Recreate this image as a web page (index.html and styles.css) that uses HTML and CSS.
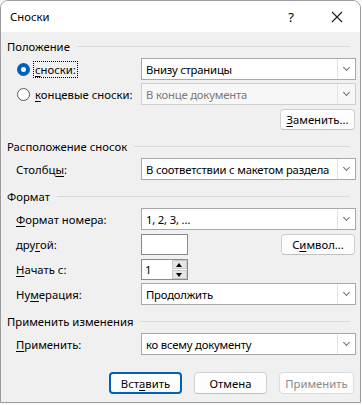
FILE: index.html
```html
<!DOCTYPE html>
<html lang="ru">
  <head>
    <meta charset="UTF-8" />
    <title>Сноски</title>
    <link rel="stylesheet" href="styles.css">
  </head>
  <body>
    <div class="dialog">
      <div class="titlebar">
        <span class="title">Сноски</span>
        <span class="help">?</span>
        <span class="close">
          <svg width="12" height="12" viewBox="0 0 12 12"><path d="M1 1L11 11M11 1L1 11" stroke="#1a1a1a" stroke-width="1.1" fill="none"/></svg>
        </span>
      </div>

      <div class="content">
        <div class="group first">
          <div class="group-title"><span>Положение</span><div class="line"></div></div>
          <div class="rows">
            <div class="row">
              <label class="label radio-label">
                <span class="radio checked"></span>
                <span class="focus"><u>с</u>носки:</span>
              </label>
              <div class="combo"><span>Внизу страницы</span><span class="arrow"></span></div>
            </div>
            <div class="row">
              <label class="label radio-label">
                <span class="radio"></span>
                <span class="plain"><u>к</u>онцевые сноски:</span>
              </label>
              <div class="combo disabled"><span>В конце документа</span><span class="arrow"></span></div>
            </div>
            <div class="row right">
              <button class="btn replace"><u>З</u>аменить...</button>
            </div>
          </div>
        </div>

        <div class="group">
          <div class="group-title"><span>Расположение сносок</span><div class="line"></div></div>
          <div class="rows">
            <div class="row">
              <label class="label">Столбц<u>ы</u>:</label>
              <div class="combo"><span>В соответствии с макетом раздела</span><span class="arrow"></span></div>
            </div>
          </div>
        </div>

        <div class="group">
          <div class="group-title"><span>Формат</span><div class="line"></div></div>
          <div class="rows">
            <div class="row">
              <label class="label"><u>Ф</u>ормат номера:</label>
              <div class="combo"><span>1, 2, 3, …</span><span class="arrow"></span></div>
            </div>
            <div class="row">
              <label class="label">дру<u>г</u>ой:</label>
              <div class="textbox"></div>
              <div class="spacer"></div>
              <button class="btn symbol">С<u>и</u>мвол...</button>
            </div>
            <div class="row">
              <label class="label"><u>Н</u>ачать с:</label>
              <div class="spin">
                <span class="spin-value">1</span>
                <span class="spin-buttons">
                  <span class="spin-up"></span>
                  <span class="spin-down"></span>
                </span>
              </div>
            </div>
            <div class="row">
              <label class="label">Ну<u>м</u>ерация:</label>
              <div class="combo"><span>Продолжить</span><span class="arrow"></span></div>
            </div>
          </div>
        </div>

        <div class="group">
          <div class="group-title"><span>Применить изменения</span><div class="line"></div></div>
          <div class="rows">
            <div class="row">
              <label class="label"><u>П</u>рименить:</label>
              <div class="combo"><span>ко всему документу</span><span class="arrow"></span></div>
            </div>
          </div>
        </div>

        <div class="actions">
          <button class="btn default">Вст<u>а</u>вить</button>
          <button class="btn">Отмена</button>
          <button class="btn disabled">Применить</button>
        </div>
      </div>
    </div>
  </body>
</html>
```

FILE: styles.css
```css
body {
  margin: 0;
  background: #fafafa;
  font-family: "Noto Sans", "Open Sans", sans-serif;
  font-size: 11.3px;
  color: #000;
  width: 362px;
  height: 405px;
  overflow: hidden;
}
u {
  text-decoration: underline;
  text-underline-offset: 2px;
}
.dialog {
  width: 359px;
  height: 401px;
  background: #f0f0f0;
  border: 1px solid #9c9c9c;
  border-radius: 8px 8px 0 0;
  overflow: hidden;
}
.titlebar {
  height: 31px;
  background: #fff;
  display: flex;
  align-items: center;
  padding-left: 9px;
}
.title {
  flex: 1;
}
.help {
  width: 46px;
  text-align: center;
  font-size: 13px;
}
.close {
  width: 46px;
  display: flex;
  justify-content: center;
}
.content {
  padding: 0 4px 0 6px;
}
.group {
  margin-top: 8px;
}
.group.first {
  margin-top: 6px;
}
.group-title {
  display: flex;
  align-items: center;
  height: 16px;
  margin-bottom: 4px;
}
.group-title .line {
  flex: 1;
  border-top: 1px solid #dadada;
  margin: 0 6px 0 7px;
}
.rows {
  display: flex;
  flex-direction: column;
  gap: 3px;
}
.row {
  display: flex;
  align-items: center;
  height: 22px;
  padding-left: 9px;
}
.row.right {
  justify-content: flex-end;
  padding-right: 1px;
}
.label {
  width: 125px;
  flex-shrink: 0;
}
.radio-label {
  display: flex;
  align-items: center;
  gap: 4px;
}
.radio {
  box-sizing: border-box;
  width: 13px;
  height: 13px;
  margin-left: 1px;
  border: 1px solid #5b5b5b;
  border-radius: 50%;
  background: #fff;
}
.radio.checked {
  border: 4px solid #005fb8;
}
.focus {
  outline: 1px dotted #000;
  padding: 0 1px;
  line-height: 15px;
}
.plain {
  padding: 0 1px;
}
.combo {
  flex: 1;
  min-width: 0;
  height: 22px;
  box-sizing: border-box;
  background: #fff;
  border: 1px solid #a8a8a8;
  display: flex;
  align-items: center;
  padding-left: 4px;
}
.combo span:first-child {
  flex: 1;
  min-width: 0;
  white-space: nowrap;
  overflow: hidden;
  letter-spacing: -0.2px;
}
.combo .arrow {
  flex-shrink: 0;
  width: 17px;
  height: 20px;
  border-left: 1px solid #e3e3e3;
  position: relative;
}
.combo .arrow::after {
  content: "";
  position: absolute;
  left: 6px;
  top: 6px;
  width: 4px;
  height: 4px;
  border-right: 1px solid #707070;
  border-bottom: 1px solid #707070;
  transform: rotate(45deg);
}
.combo.disabled {
  background: #f7f7f7;
  border-color: #cfcfcf;
  color: #7a7a7a;
}
.textbox {
  width: 47px;
  height: 21px;
  box-sizing: border-box;
  background: #fff;
  border: 1px solid #8a8a8a;
}
.spacer {
  flex: 1;
}
.spin {
  width: 47px;
  height: 21px;
  box-sizing: border-box;
  background: #fff;
  border: 1px solid #8a8a8a;
  display: flex;
  align-items: center;
}
.spin-value {
  flex: 1;
  padding-left: 3px;
}
.spin-buttons {
  width: 15px;
  height: 19px;
  display: flex;
  flex-direction: column;
  gap: 1px;
  background: #fff;
}
.spin-up,
.spin-down {
  flex: 1;
  background: #e6e6e6;
  border: 1px solid #c8c8c8;
  position: relative;
}
.spin-up::after,
.spin-down::after {
  content: "";
  position: absolute;
  left: 3px;
  top: 2px;
  border-left: 3.5px solid transparent;
  border-right: 3.5px solid transparent;
}
.spin-up::after {
  border-bottom: 4px solid #000;
}
.spin-down::after {
  border-top: 4px solid #000;
}
.btn {
  font-family: inherit;
  font-size: 11.3px;
  color: #000;
  background: #fdfdfd;
  border: 1px solid #d0d0d0;
  border-bottom-color: #c0c0c0;
  border-radius: 4px;
  height: 21px;
  padding: 0;
}
.btn.replace {
  width: 75px;
}
.btn.symbol {
  width: 74px;
  margin-right: 1px;
}
.actions {
  display: flex;
  justify-content: flex-end;
  gap: 12px;
  margin-top: 17px;
  padding-right: 2px;
}
.actions .btn {
  width: 73px;
  height: 22px;
}
.actions .btn.default {
  border: 2px solid #005fb8;
}
.actions .btn.disabled {
  color: #8a8a8a;
  border-color: #dcdcdc;
  width: 75px;
}
```
